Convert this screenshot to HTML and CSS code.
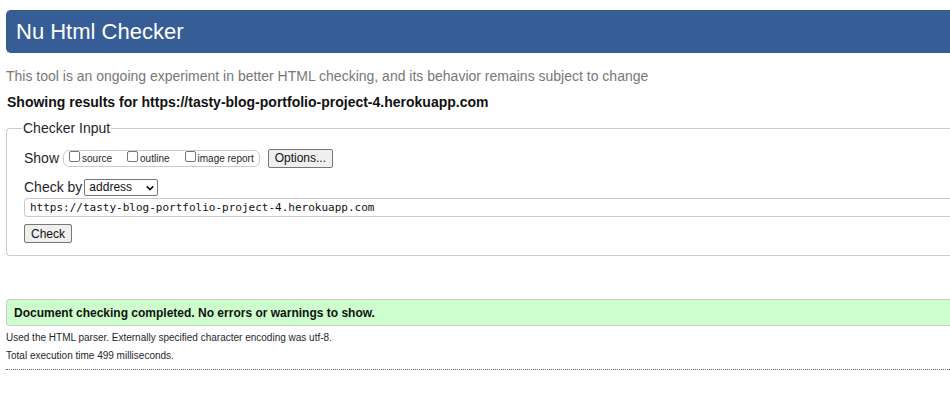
FILE: index.html
```html
<!DOCTYPE html>
<html lang="en">
<head>
<meta charset="utf-8">
<title>Nu Html Checker</title>
<link rel="stylesheet" href="styles.css">
</head>
<body>
<header class="banner"><h1>Nu Html Checker</h1></header>
<main>
<p class="note">This tool is an ongoing experiment in better HTML checking, and its behavior remains subject to change</p>
<h2 class="subject">Showing results for https://tasty-blog-portfolio-project-4.herokuapp.com</h2>
<form>
<fieldset class="panel">
<legend>Checker Input</legend>
<div class="row show-row">
<span>Show</span>
<div class="checks">
<label><input type="checkbox">source</label>
<label><input type="checkbox">outline</label>
<label><input type="checkbox">image report</label>
</div>
<button type="button" class="button options">Options...</button>
</div>
<div class="row by-row">
<label for="by">Check by</label>
<div class="select-wrap">
<select id="by"><option>address</option><option>file upload</option><option>text input</option></select>
<svg class="chevron" viewBox="0 0 10 6" aria-hidden="true"><path d="M1 1l4 4 4-4" fill="none" stroke="#111" stroke-width="2"/></svg>
</div>
</div>
<input class="address" type="text" aria-label="Address" value="https://tasty-blog-portfolio-project-4.herokuapp.com">
<button type="submit" class="button">Check</button>
</fieldset>
</form>
<section class="results">
<p class="success">Document checking completed. No errors or warnings to show.</p>
<p class="detail">Used the HTML parser. Externally specified character encoding was utf-8.</p>
<p class="detail">Total execution time 499 milliseconds.</p>
</section>
<hr class="rule">
</main>
</body>
</html>
```
FILE: styles.css
```css
* { box-sizing: border-box; }
body {
  margin: 10px 0 0 6px;
  background: #fff;
  color: #1f1f2b;
  font-family: "Liberation Sans", Arial, sans-serif;
  font-size: 14px;
}
h1, h2, p { margin: 0; font-weight: normal; }
.banner {
  padding: 8px 9px;
  border: 1px solid #31588f;
  border-right: 0;
  border-radius: 5px 0 0 5px;
  background: #365d95;
  color: #fff;
}
.banner h1 { font-size: 22px; line-height: 25px; }
.note { margin-top: 14px; color: #777; font-size: 14px; line-height: 18px; }
.subject { margin-top: 8px; padding-left: 1px; color: #111; font-size: 14px; font-weight: bold; line-height: 18px; }
.panel {
  margin: 8px 0 0;
  padding: 11px 0 12px 17px;
  border: 1px solid #ccc;
  border-right: 0;
  border-radius: 4px 0 0 4px;
}
.panel legend { margin-left: -2px; padding: 0 1px; line-height: 18px; }
.row { display: flex; align-items: center; }
.show-row { height: 20px; }
.checks {
  display: flex;
  align-items: center;
  gap: 15px;
  height: 17px;
  margin: 0 8px 0 4px;
  padding: 0 5px;
  border: 1px solid #ccc;
  border-radius: 6px;
  font-size: 10px;
}
.checks label { display: flex; align-items: center; gap: 2px; }
.checks input {
  appearance: none;
  width: 11px;
  height: 11px;
  margin: 0 0 3px;
  border: 1px solid #767676;
  border-radius: 2px;
  background: #fff;
}
.button {
  display: block;
  height: 19px;
  padding: 0 6px;
  border: 1px solid #767676;
  border-radius: 2px;
  background: #efefef;
  color: #111;
  font: 12px/16px "Liberation Sans", Arial, sans-serif;
}
.by-row { height: 18px; margin-top: 10px; gap: 2px; }
.select-wrap { position: relative; }
.select-wrap select {
  appearance: none;
  display: block;
  width: 74px;
  height: 17px;
  padding: 0 4px;
  border: 1px solid #767676;
  border-radius: 2px;
  background: #fff;
  color: #111;
  font: 12px/15px "Liberation Sans", Arial, sans-serif;
}
.chevron { position: absolute; top: 6px; right: 4px; width: 8px; height: 6px; pointer-events: none; }
.address {
  display: block;
  width: 100%;
  height: 19px;
  margin: 2px 0 7px;
  padding: 0 5px;
  border: 1px solid #ccc;
  border-right: 0;
  border-radius: 4px 0 0 4px;
  color: #111;
  font: 11px/16px "DejaVu Sans Mono", monospace;
}
.results { margin-top: 43px; }
.success {
  margin-bottom: 3px;
  padding: 5px 7px 4px;
  border: 1px solid #ccc;
  border-right: 0;
  border-radius: 4px 0 0 4px;
  background: #cfc;
  color: #111;
  font-size: 12px;
  font-weight: bold;
  line-height: 16px;
}
.detail { font-size: 10px; line-height: 18px; }
.rule { margin: 4px 0 0; border: 0; border-top: 1px dotted #666; }
```
